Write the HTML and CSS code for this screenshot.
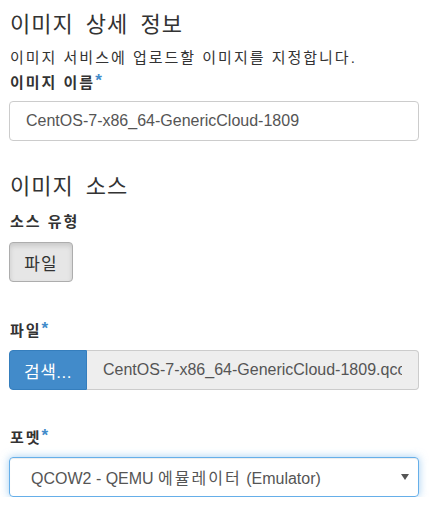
FILE: index.html
```html
<!DOCTYPE html>
<html lang="ko">
<head>
<meta charset="utf-8">
<link rel="stylesheet" href="styles.css">
</head>
<body>
<div class="page">
  <h3 class="section-title first">이미지 상세 정보</h3>
  <p class="help">이미지 서비스에 업로드할 이미지를 지정합니다.</p>
  <div class="field f-name">
    <label class="label">이미지 이름<span class="req">*</span></label>
    <div class="input">CentOS-7-x86_64-GenericCloud-1809</div>
  </div>

  <h3 class="section-title second">이미지 소스</h3>
  <div class="field f-type">
    <label class="label">소스 유형</label>
    <div class="btn-group"><span class="btn">파일</span></div>
  </div>

  <div class="field f-gap">
    <label class="label">파일<span class="req">*</span></label>
    <div class="file-group">
      <span class="browse">검색...</span>
      <span class="file-name"><span class="file-text">CentOS-7-x86_64-GenericCloud-1809.qcow2</span></span>
    </div>
  </div>

  <div class="field f-gap f-last">
    <label class="label">포멧<span class="req">*</span></label>
    <div class="select">
      <span>QCOW2 - QEMU <span class="ko">에뮬레이터</span> (Emulator)</span>
      <svg class="caret" width="8" height="6" viewBox="0 0 8 6"><path d="M0 0H8L4 6Z" fill="#555"/></svg>
    </div>
  </div>
</div>
</body>
</html>
```

FILE: styles.css
```css
* { box-sizing: border-box; }
body {
  margin: 0;
  background: #fff;
  color: #333;
  font-family: "Liberation Sans", "Noto Sans CJK KR", sans-serif;
  font-size: 14px;
}
.page {
  padding: 0 23px 0 9px;
  width: 442px;
}
.section-title {
  font-size: 22px;
  font-weight: normal;
  line-height: 26px;
  letter-spacing: 1px;
  word-spacing: 5px;
  margin: 0 0 0 1px;
  color: #333;
}
.section-title.first { margin-top: 12px; }
.section-title.second { margin-top: 33px; }
.help {
  margin: 10px 0 0 1px;
  font-size: 15px;
  line-height: 20px;
  letter-spacing: 2px;
}
.field {
  display: flex;
  flex-direction: column;
  align-items: flex-start;
}
.f-name { margin-top: 3px; }
.f-type { margin-top: 12px; }
.f-gap { margin-top: 37px; }
.f-gap.f-last { margin-top: 36px; }
.label {
  font-weight: bold;
  font-size: 15px;
  line-height: 20px;
  letter-spacing: 2px;
  margin: 0 0 0 1px;
}
.f-name .label { margin-bottom: 8px; }
.f-type .label { margin-bottom: 10px; }
.f-gap .label { margin-bottom: 9px; }
.req {
  color: #428bca;
  font-size: 17px;
  letter-spacing: 0;
  vertical-align: 2px;
}
.input {
  width: 410px;
  height: 40px;
  border: 1px solid #ccc;
  border-radius: 4px;
  padding: 0 16px;
  display: flex;
  align-items: center;
  font-size: 16px;
  color: #555;
}
.btn-group { display: flex; }
.btn {
  width: 64px;
  height: 40px;
  border: 1px solid #adadad;
  border-radius: 4px;
  background: #e6e6e6;
  box-shadow: inset 0 3px 5px rgba(0,0,0,0.125);
  display: flex;
  align-items: center;
  justify-content: center;
  font-size: 17px;
  letter-spacing: 1px;
  color: #333;
}
.file-group {
  width: 410px;
  height: 40px;
  display: flex;
}
.browse {
  width: 78px;
  background: #428bca;
  color: #fff;
  border: 1px solid #357ebd;
  border-radius: 4px 0 0 4px;
  display: flex;
  align-items: center;
  justify-content: center;
  font-size: 17px;
  letter-spacing: 0.5px;
}
.file-name {
  flex: 1;
  min-width: 0;
  background: #eee;
  border: 1px solid #ccc;
  border-left: 0;
  border-radius: 0 4px 4px 0;
  padding: 0 16px 0 16px;
  display: flex;
  align-items: center;
  font-size: 16px;
  color: #555;
}
.file-text {
  flex: 1;
  min-width: 0;
  overflow: hidden;
  white-space: nowrap;
}
.select {
  width: 410px;
  height: 40px;
  border: 1px solid #66afe9;
  border-radius: 4px;
  box-shadow: inset 0 1px 1px rgba(0,0,0,.075), 0 0 8px rgba(102,175,233,.6);
  display: flex;
  align-items: center;
  justify-content: space-between;
  padding: 0 9px 0 21px;
  font-size: 16px;
  color: #555;
}
.ko { letter-spacing: 2px; }
.caret { display: block; }
```
